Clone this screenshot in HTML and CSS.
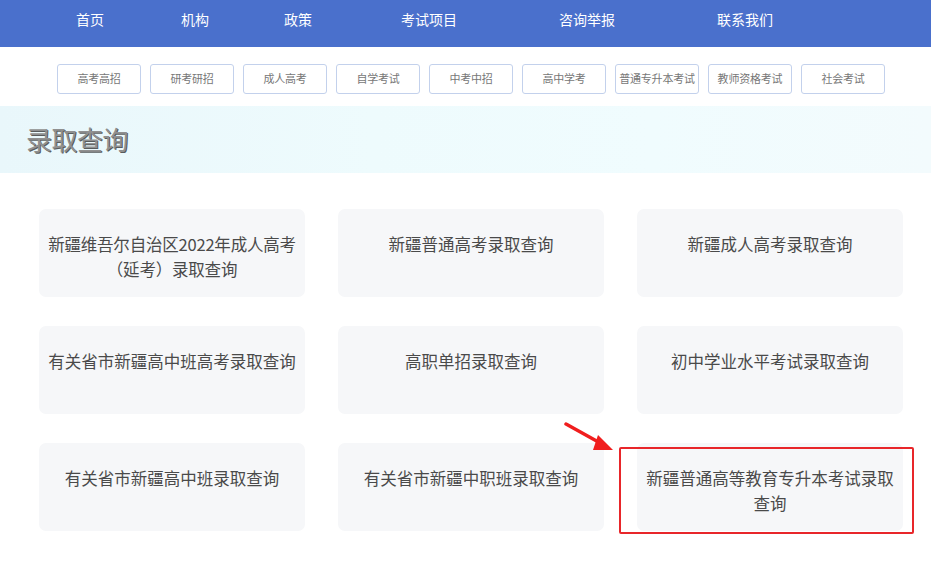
FILE: index.html
```html
<!DOCTYPE html>
<html lang="zh">
<head>
<meta charset="utf-8">
<title>录取查询</title>
<link rel="stylesheet" href="styles.css">
</head>
<body>
<nav class="topnav">
  <a class="nav-item n1">首页</a>
  <a class="nav-item n2">机构</a>
  <a class="nav-item n3">政策</a>
  <a class="nav-item n4">考试项目</a>
  <a class="nav-item n5">咨询举报</a>
  <a class="nav-item n6">联系我们</a>
</nav>
<div class="subnav">
  <a class="sub-btn">高考高招</a>
  <a class="sub-btn">研考研招</a>
  <a class="sub-btn">成人高考</a>
  <a class="sub-btn">自学考试</a>
  <a class="sub-btn">中考中招</a>
  <a class="sub-btn">高中学考</a>
  <a class="sub-btn">普通专升本考试</a>
  <a class="sub-btn">教师资格考试</a>
  <a class="sub-btn">社会考试</a>
</div>
<div class="banner"><h1 class="banner-title">录取查询</h1></div>
<main class="cards">
  <div class="card tight">新疆维吾尔自治区2022年成人高考<br>（延考）录取查询</div>
  <div class="card">新疆普通高考录取查询</div>
  <div class="card">新疆成人高考录取查询</div>
  <div class="card">有关省市新疆高中班高考录取查询</div>
  <div class="card">高职单招录取查询</div>
  <div class="card">初中学业水平考试录取查询</div>
  <div class="card">有关省市新疆高中班录取查询</div>
  <div class="card">有关省市新疆中职班录取查询</div>
  <div class="card">新疆普通高等教育专升本考试录取<br>查询</div>
</main>
<div class="highlight"></div>
<svg class="arrow" width="60" height="40" viewBox="0 0 60 40">
  <path d="M2 2 L38 22" stroke="#f01e1e" stroke-width="3.5" stroke-linecap="round"/>
  <path d="M34 13 L49 28 L29 28 Z" fill="#f01e1e"/>
</svg>
</body>
</html>
```
FILE: styles.css
```css
* { box-sizing: border-box; }
body {
  margin: 0;
  background: #fff;
  font-family: "Noto Sans CJK SC", "Noto Sans", sans-serif;
  position: relative;
  min-height: 565px;
}
.topnav {
  height: 47px;
  background: #4a70cc;
  display: flex;
  align-items: center;
  padding-left: 76px;
}
.nav-item {
  color: #fff;
  font-size: 14px;
  line-height: 20px;
  padding-bottom: 9px;
}
.n2 { margin-left: 77px; }
.n3 { margin-left: 75px; }
.n4 { margin-left: 89px; }
.n5 { margin-left: 102px; }
.n6 { margin-left: 102px; }
.subnav {
  display: flex;
  gap: 9px;
  padding: 17px 0 12px 57px;
}
.sub-btn {
  width: 84px;
  height: 30px;
  border: 1px solid #c3d1ec;
  border-radius: 3px;
  font-size: 11px;
  color: #777;
  display: flex;
  align-items: center;
  justify-content: center;
  white-space: nowrap;
  letter-spacing: -0.2px;
  padding-bottom: 2px;
}
.banner {
  height: 67px;
  background: linear-gradient(90deg, #e9f7fb 0%, #eefbfd 40%, #f0fcfe 70%, #f3fbfd 100%);
  display: flex;
  align-items: center;
  padding-left: 26px;
}
.banner-title {
  margin: 0;
  font-size: 26px;
  font-weight: normal;
  color: #909090;
  text-shadow: 1px 1px 0.5px rgba(40, 40, 40, 0.75);
  letter-spacing: -0.5px;
  padding-bottom: 2px;
}
.cards {
  display: grid;
  grid-template-columns: repeat(3, 266px);
  grid-auto-rows: 88px;
  column-gap: 33px;
  row-gap: 29px;
  padding: 36px 0 0 39px;
}
.card {
  background: #f6f7f9;
  border-radius: 7px;
  display: flex;
  align-items: flex-start;
  justify-content: center;
  text-align: center;
  font-size: 16.5px;
  line-height: 25px;
  color: #4a4a4a;
  padding: 23px 0 0;
  white-space: nowrap;
}
.tight { letter-spacing: -0.2px; }
.highlight {
  position: absolute;
  left: 619px;
  top: 447px;
  width: 295px;
  height: 87px;
  border: 2px solid #e8262a;
  border-radius: 2px;
}
.arrow {
  position: absolute;
  left: 564px;
  top: 422px;
}
```
